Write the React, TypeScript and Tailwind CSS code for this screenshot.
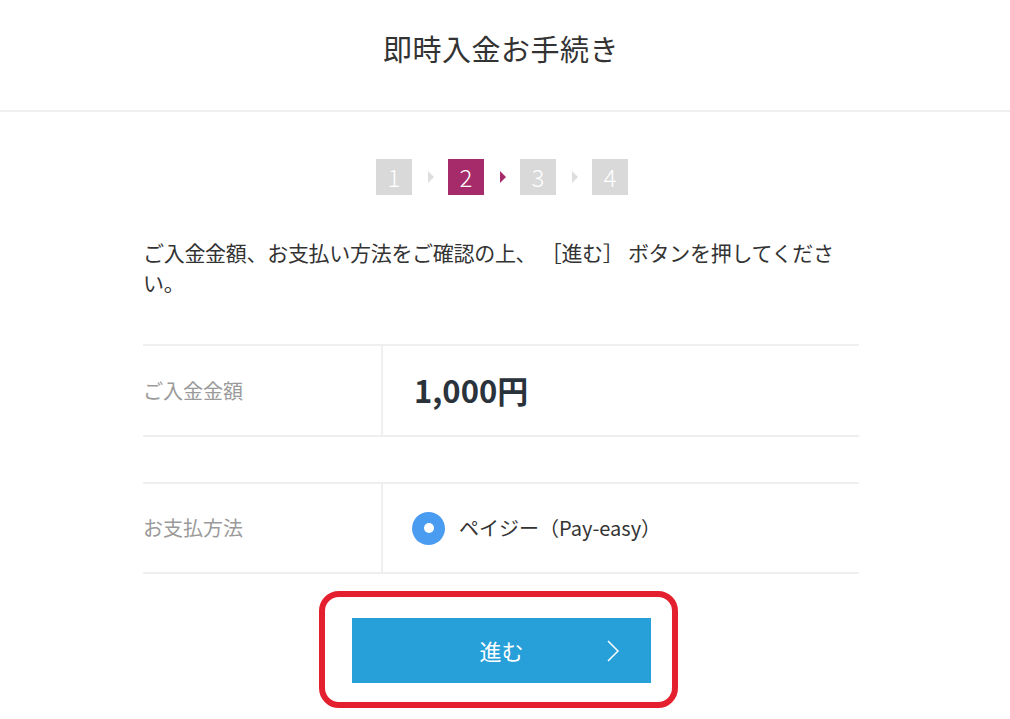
import React from "react";

const font = { fontFamily: '"Noto Sans CJK JP", "Noto Sans", sans-serif' };

function Step({ n, active }: { n: number; active?: boolean }) {
  return (
    <div
      className={`flex h-[36px] w-[36px] items-center justify-center text-[24px] font-light leading-none text-white ${
        active ? "bg-[#a62b6b]" : "bg-[#d9d9d9]"
      }`}
    >
      {n}
    </div>
  );
}

function Arrow({ active }: { active?: boolean }) {
  return (
    <div className="ml-[16px] mr-[14px] flex h-[36px] items-center">
      <div
        className={`h-0 w-0 border-y-[6px] border-y-transparent border-l-[6px] ${
          active ? "border-l-[#a62b6b]" : "border-l-[#dedede]"
        }`}
      />
    </div>
  );
}

export default function App() {
  return (
    <div className="min-h-[719px] w-[1010px] bg-white text-[#333]" style={font}>
      <div className="w-full border-b-2 border-[#efefef]">
        <div className="flex h-[110px] w-[1002px] items-center justify-center pb-[12px] text-[29px] tracking-[0.5px] text-[#333]">
          即時入金お手続き
        </div>
      </div>

      <div className="w-[716px]" style={{ marginLeft: 143 }}>
        <div className="mt-[47px] flex justify-center pl-[2px]">
          <Step n={1} />
          <Arrow />
          <Step n={2} active />
          <Arrow active />
          <Step n={3} />
          <Arrow />
          <Step n={4} />
        </div>

        <p className="mt-[42px] w-[708px] text-[21px] leading-[30px] tracking-[-0.3px] text-[#333]">
          ご入金金額、お支払い方法をご確認の上、 ［進む］ ボタンを押してください。
        </p>

        <div className="mt-[47px] flex h-[93px] border-y-2 border-[#efefef]">
          <div className="flex w-[238px] items-center text-[20px] text-[#9a9a9a]">ご入金金額</div>
          <div className="flex flex-1 items-center border-l-2 border-[#efefef] pl-[31px] text-[31px] font-bold text-[#2a323c]">
            1,000円
          </div>
        </div>

        <div className="mt-[45px] flex h-[92px] border-y-2 border-[#efefef]">
          <div className="flex w-[238px] items-center text-[20px] text-[#9a9a9a]">お支払方法</div>
          <div className="flex flex-1 items-center border-l-2 border-[#efefef] pl-[29px]">
            <div className="flex h-[33px] w-[33px] items-center justify-center rounded-full bg-[#4a9cf0]">
              <div className="h-[10px] w-[10px] rounded-full bg-white" />
            </div>
            <span className="ml-[14px] text-[20px] text-[#333]">ペイジー（Pay-easy）</span>
          </div>
        </div>

        <div className="mt-[17px] flex">
          <div className="ml-[176px] rounded-[20px] border-[6px] border-[#e4202f] pb-[19px] pl-[27px] pr-[21px] pt-[21px]">
            <div className="relative flex h-[65px] w-[299px] items-center justify-center bg-[#279fd9] text-[22px] text-white">
              進む
              <svg
                className="absolute right-[32px] top-[22px]"
                width="12"
                height="22"
                viewBox="0 0 12 22"
                fill="none"
              >
                <path d="M1 1 L11 11 L1 21" stroke="white" strokeWidth="1.5" />
              </svg>
            </div>
          </div>
        </div>
      </div>
    </div>
  );
}
